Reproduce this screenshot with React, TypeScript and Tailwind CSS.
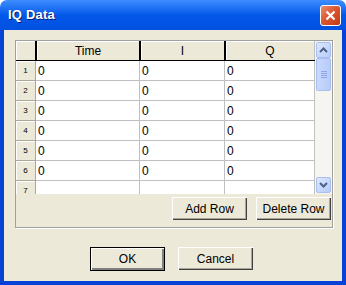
import React from 'react'

const rows = [1, 2, 3, 4, 5, 6]

function ScrollButton({ dir }: { dir: 'up' | 'down' }) {
  return (
    <div className="mx-[1px] h-[16px] rounded-[2px] border border-[#a9bff0] bg-gradient-to-br from-[#dde8fe] to-[#b6cbf8] flex items-center justify-center">
      <svg width="9" height="6" viewBox="0 0 9 6">
        {dir === 'up' ? (
          <path d="M1 5 L4.5 1.5 L8 5" fill="none" stroke="#4d6185" strokeWidth="2" />
        ) : (
          <path d="M1 1 L4.5 4.5 L8 1" fill="none" stroke="#4d6185" strokeWidth="2" />
        )}
      </svg>
    </div>
  )
}

function XpButton({ label, isDefault = false }: { label: string; isDefault?: boolean }) {
  return (
    <div
      className={`w-[75px] flex items-center justify-center bg-[#ece9d8] text-[12px] text-black ${
        isDefault
          ? 'h-[24px] border border-black shadow-[inset_1px_1px_0_#fff,inset_-2px_-2px_0_#808080]'
          : 'h-[23px] shadow-[inset_1px_1px_0_#fff,inset_-1px_-1px_0_#404040,inset_-2px_-2px_0_#aca899]'
      }`}
    >
      {label}
    </div>
  )
}

export default function App() {
  return (
    <div
      className="w-[346px] h-[285px] flex flex-col overflow-hidden"
      style={{ fontFamily: '"Liberation Sans", Arial, sans-serif' }}
    >
      {/* title bar */}
      <div className="h-[30px] shrink-0 rounded-t-[7px] bg-gradient-to-b from-[#3d8dff] via-[#0358ea] to-[#0250e0] flex items-center pl-[8px] pr-[5px]">
        <span className="text-white font-bold text-[13px] [text-shadow:1px_1px_0_#0a1e6e] tracking-[0.2px]">
          IQ Data
        </span>
        <div className="ml-auto w-[21px] h-[21px] rounded-[3px] border border-white bg-gradient-to-br from-[#e98b6c] via-[#d9532d] to-[#c13a14] flex items-center justify-center">
          <svg width="11" height="11" viewBox="0 0 11 11">
            <path d="M1.5 1.5 L9.5 9.5 M9.5 1.5 L1.5 9.5" stroke="#fff" strokeWidth="2.2" />
          </svg>
        </div>
      </div>

      {/* client area */}
      <div className="flex-1 flex flex-col bg-[#ece9d8] border-x-4 border-b-4 border-[#0841d6]">
        <div className="ml-[11px] mt-[10px] w-[318px] h-[188px] border border-[#a0a0a0] shadow-[1px_1px_0_#fff] flex flex-col">
          {/* grid */}
          <div className="h-[153px] flex overflow-hidden">
            <div className="flex-1 flex flex-col bg-white overflow-hidden">
              {/* header row */}
              <div className="h-[20px] shrink-0 flex bg-[#ece9d8] border-b border-black">
                <div className="w-[19px] shrink-0 shadow-[inset_1px_1px_0_#fff]" />
                <div className="w-[104px] shrink-0 border-l-2 border-black flex items-center justify-center text-[12px] shadow-[inset_1px_1px_0_#fff]">
                  Time
                </div>
                <div className="w-[85px] shrink-0 border-l-2 border-black flex items-center justify-center text-[12px] shadow-[inset_1px_1px_0_#fff]">
                  I
                </div>
                <div className="flex-1 border-l-2 border-black border-r border-r-[#c0c0c0] flex items-center justify-center text-[12px] shadow-[inset_1px_1px_0_#fff]">
                  Q
                </div>
              </div>
              {[...rows, 7].map((r) => (
                <div key={r} className="h-[20px] shrink-0 flex">
                  <div className="w-[20px] shrink-0 bg-[#ece9d8] border-b border-r border-[#aca899] shadow-[inset_1px_1px_0_#fff] flex items-center justify-center text-[8px] text-black">
                    {r}
                  </div>
                  <div className="w-[104px] shrink-0 border-b border-r border-[#c0c0c0] pl-[2px] flex items-center text-[12px]">
                    {r < 7 ? '0' : ''}
                  </div>
                  <div className="w-[85px] shrink-0 border-b border-r border-[#c0c0c0] pl-[2px] flex items-center text-[12px]">
                    {r < 7 ? '0' : ''}
                  </div>
                  <div className="flex-1 border-b border-r border-[#c0c0c0] pl-[2px] flex items-center text-[12px]">
                    {r < 7 ? '0' : ''}
                  </div>
                </div>
              ))}
            </div>
            {/* scrollbar */}
            <div className="w-[17px] shrink-0 bg-[#f6f5f0] flex flex-col py-[1px]">
              <ScrollButton dir="up" />
              <div className="mx-[1px] h-[33px] rounded-[2px] border border-[#a9bff0] bg-gradient-to-r from-[#c9d9fd] to-[#b8ccf9] flex flex-col items-center justify-center gap-[1px]">
                <div className="w-[6px] h-[1px] bg-[#8ea6e8]" />
                <div className="w-[6px] h-[1px] bg-[#8ea6e8]" />
                <div className="w-[6px] h-[1px] bg-[#8ea6e8]" />
                <div className="w-[6px] h-[1px] bg-[#8ea6e8]" />
              </div>
              <div className="flex-1" />
              <ScrollButton dir="down" />
            </div>
          </div>

          <div className="mt-[3px] flex justify-end gap-[9px] pr-[1px]">
            <XpButton label="Add Row" />
            <XpButton label="Delete Row" />
          </div>
        </div>

        <div className="mt-[19px] flex pl-[86px] gap-[13px]">
          <XpButton label="OK" isDefault />
          <XpButton label="Cancel" />
        </div>
      </div>
    </div>
  )
}
